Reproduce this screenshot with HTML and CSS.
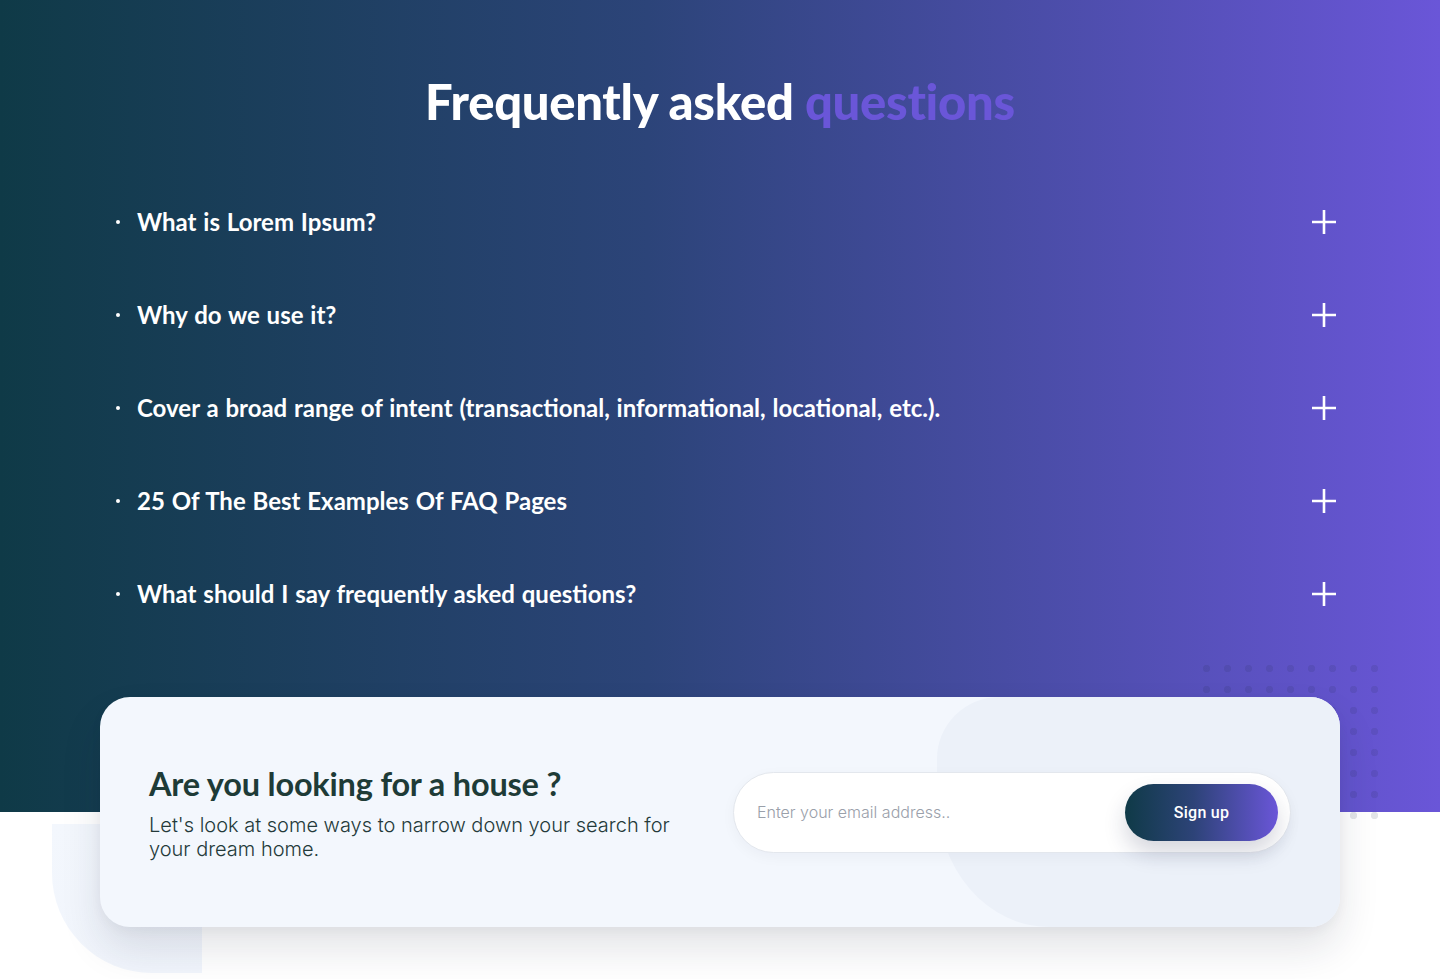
FILE: index.html
```html
<!DOCTYPE html>
<html lang="en">
<head>
<meta charset="utf-8">
<title>FAQ</title>
<link rel="stylesheet" href="styles.css">
</head>
<body>
<main class="page">
  <section class="faq">
    <h1 class="faq-title">Frequently asked <span class="accent">questions</span></h1>
    <ul class="faq-list">
      <li class="faq-item"><span class="bullet"></span><span class="faq-q">What is Lorem Ipsum?</span><svg class="plus" viewBox="0 0 26 26"><path d="M13 1v24M1 13h24"/></svg></li>
      <li class="faq-item"><span class="bullet"></span><span class="faq-q">Why do we use it?</span><svg class="plus" viewBox="0 0 26 26"><path d="M13 1v24M1 13h24"/></svg></li>
      <li class="faq-item"><span class="bullet"></span><span class="faq-q">Cover a broad range of intent (transactional, informational, locational, etc.).</span><svg class="plus" viewBox="0 0 26 26"><path d="M13 1v24M1 13h24"/></svg></li>
      <li class="faq-item"><span class="bullet"></span><span class="faq-q">25 Of The Best Examples Of FAQ Pages</span><svg class="plus" viewBox="0 0 26 26"><path d="M13 1v24M1 13h24"/></svg></li>
      <li class="faq-item"><span class="bullet"></span><span class="faq-q">What should I say frequently asked questions?</span><svg class="plus" viewBox="0 0 26 26"><path d="M13 1v24M1 13h24"/></svg></li>
    </ul>
  </section>

  <section class="cta">
    <div class="dots"></div>
    <div class="corner-shape"></div>
    <div class="cta-card">
      <div class="cta-blob"></div>
      <div class="cta-text">
        <h2 class="cta-title">Are you looking for a house ?</h2>
        <p class="cta-desc">Let's look at some ways to narrow down your search for your dream home.</p>
      </div>
      <form class="signup">
        <input class="signup-input" type="email" placeholder="Enter your email address..">
        <button class="signup-btn" type="button">Sign up</button>
      </form>
    </div>
  </section>
</main>
</body>
</html>
```

FILE: styles.css
```css
* { box-sizing: border-box; }

html, body {
  margin: 0;
  padding: 0;
}

body {
  width: 1440px;
  min-height: 979px;
  background: linear-gradient(90deg, #0f3a47 0%, #2c4479 45%, #6a56d8 100%) top left / 100% 812px no-repeat, #ffffff;
  font-family: "Lato", "Noto Sans", sans-serif;
  overflow: hidden;
}

.page {
  position: relative;
  min-height: 979px;
}

.faq {
  padding-top: 71px;
}

.faq-title {
  margin: 0;
  text-align: center;
  font-size: 49px;
  line-height: 60px;
  font-weight: 900;
  color: #ffffff;
  letter-spacing: -0.3px;
}

.accent { color: #6a56d8; }

.faq-list {
  list-style: none;
  margin: 44px auto 0;
  padding: 0;
  width: 1240px;
}

.faq-item {
  height: 93px;
  display: flex;
  align-items: center;
  padding: 0 3px 0 16px;
  color: #ffffff;
}

.bullet {
  width: 4px;
  height: 4px;
  border-radius: 50%;
  background: #ffffff;
  margin-right: 17px;
  flex: none;
}

.faq-q {
  flex: 1;
  font-size: 24px;
  font-weight: 700;
  line-height: 30px;
  word-spacing: 1px;
}

.plus {
  width: 26px;
  height: 26px;
  flex: none;
  stroke: #ffffff;
  stroke-width: 2.6;
  fill: none;
}

.cta {
  position: relative;
  padding-top: 57px;
}

.dots {
  position: absolute;
  left: 1196px;
  top: 18px;
  width: 189px;
  height: 168px;
  background-image: radial-gradient(circle, rgba(30, 40, 70, 0.12) 3.4px, transparent 4px);
  background-size: 21px 21px;
}

.corner-shape {
  position: absolute;
  left: 52px;
  top: 184px;
  width: 150px;
  height: 149px;
  border-radius: 0 0 0 100px;
  background: linear-gradient(180deg, #f3f7fd, #f1f5fc);
}

.cta-card {
  position: relative;
  z-index: 1;
  width: 1240px;
  height: 230px;
  margin: 0 auto;
  padding: 0 49px;
  display: flex;
  align-items: center;
  justify-content: space-between;
  background: #f3f7fd;
  border-radius: 30px;
  overflow: hidden;
  box-shadow: 0 22px 40px rgba(25, 35, 60, 0.12), 0 4px 12px rgba(25, 35, 60, 0.04);
}

.cta-blob {
  position: absolute;
  left: 837px;
  top: 0;
  right: 0;
  bottom: 0;
  background: #ecf1f9;
  border-radius: 62px 0 0 112px / 62px 0 0 130px;
}

.cta-text {
  position: relative;
  padding-top: 1px;
}

.cta-title {
  margin: 0 0 9px;
  font-size: 32.5px;
  line-height: 40px;
  font-weight: 700;
  color: #1e3b37;
  letter-spacing: -0.2px;
}

.cta-desc {
  margin: 0;
  max-width: 545px;
  font-family: "Inter", "Noto Sans", sans-serif;
  font-weight: 300;
  font-size: 20px;
  line-height: 24px;
  color: #243a3a;
}

.signup {
  position: relative;
  width: 558px;
  height: 81px;
  display: flex;
  align-items: center;
  padding: 0 12px 0 23px;
  background: #ffffff;
  border: 1px solid #e3e7ed;
  border-radius: 41px;
  box-shadow: 0 4px 14px rgba(20, 30, 60, 0.04);
}

.signup-input {
  flex: 1;
  border: none;
  outline: none;
  background: transparent;
  font-family: "Inter", "Noto Sans", sans-serif;
  font-weight: 300;
  font-size: 16px;
  color: #333;
  padding: 0;
}

.signup-input::placeholder { color: #9aa0aa; }

.signup-btn {
  flex: none;
  width: 153px;
  height: 57px;
  border: none;
  border-radius: 29px;
  background: linear-gradient(90deg, #0f3a47 0%, #2d4378 45%, #6a56d8 100%);
  color: #ffffff;
  font-family: "Roboto", "Noto Sans", sans-serif;
  font-weight: 500;
  font-size: 16px;
  letter-spacing: 0.3px;
  box-shadow: 0 12px 22px rgba(25, 35, 70, 0.18);
  cursor: pointer;
}
```
